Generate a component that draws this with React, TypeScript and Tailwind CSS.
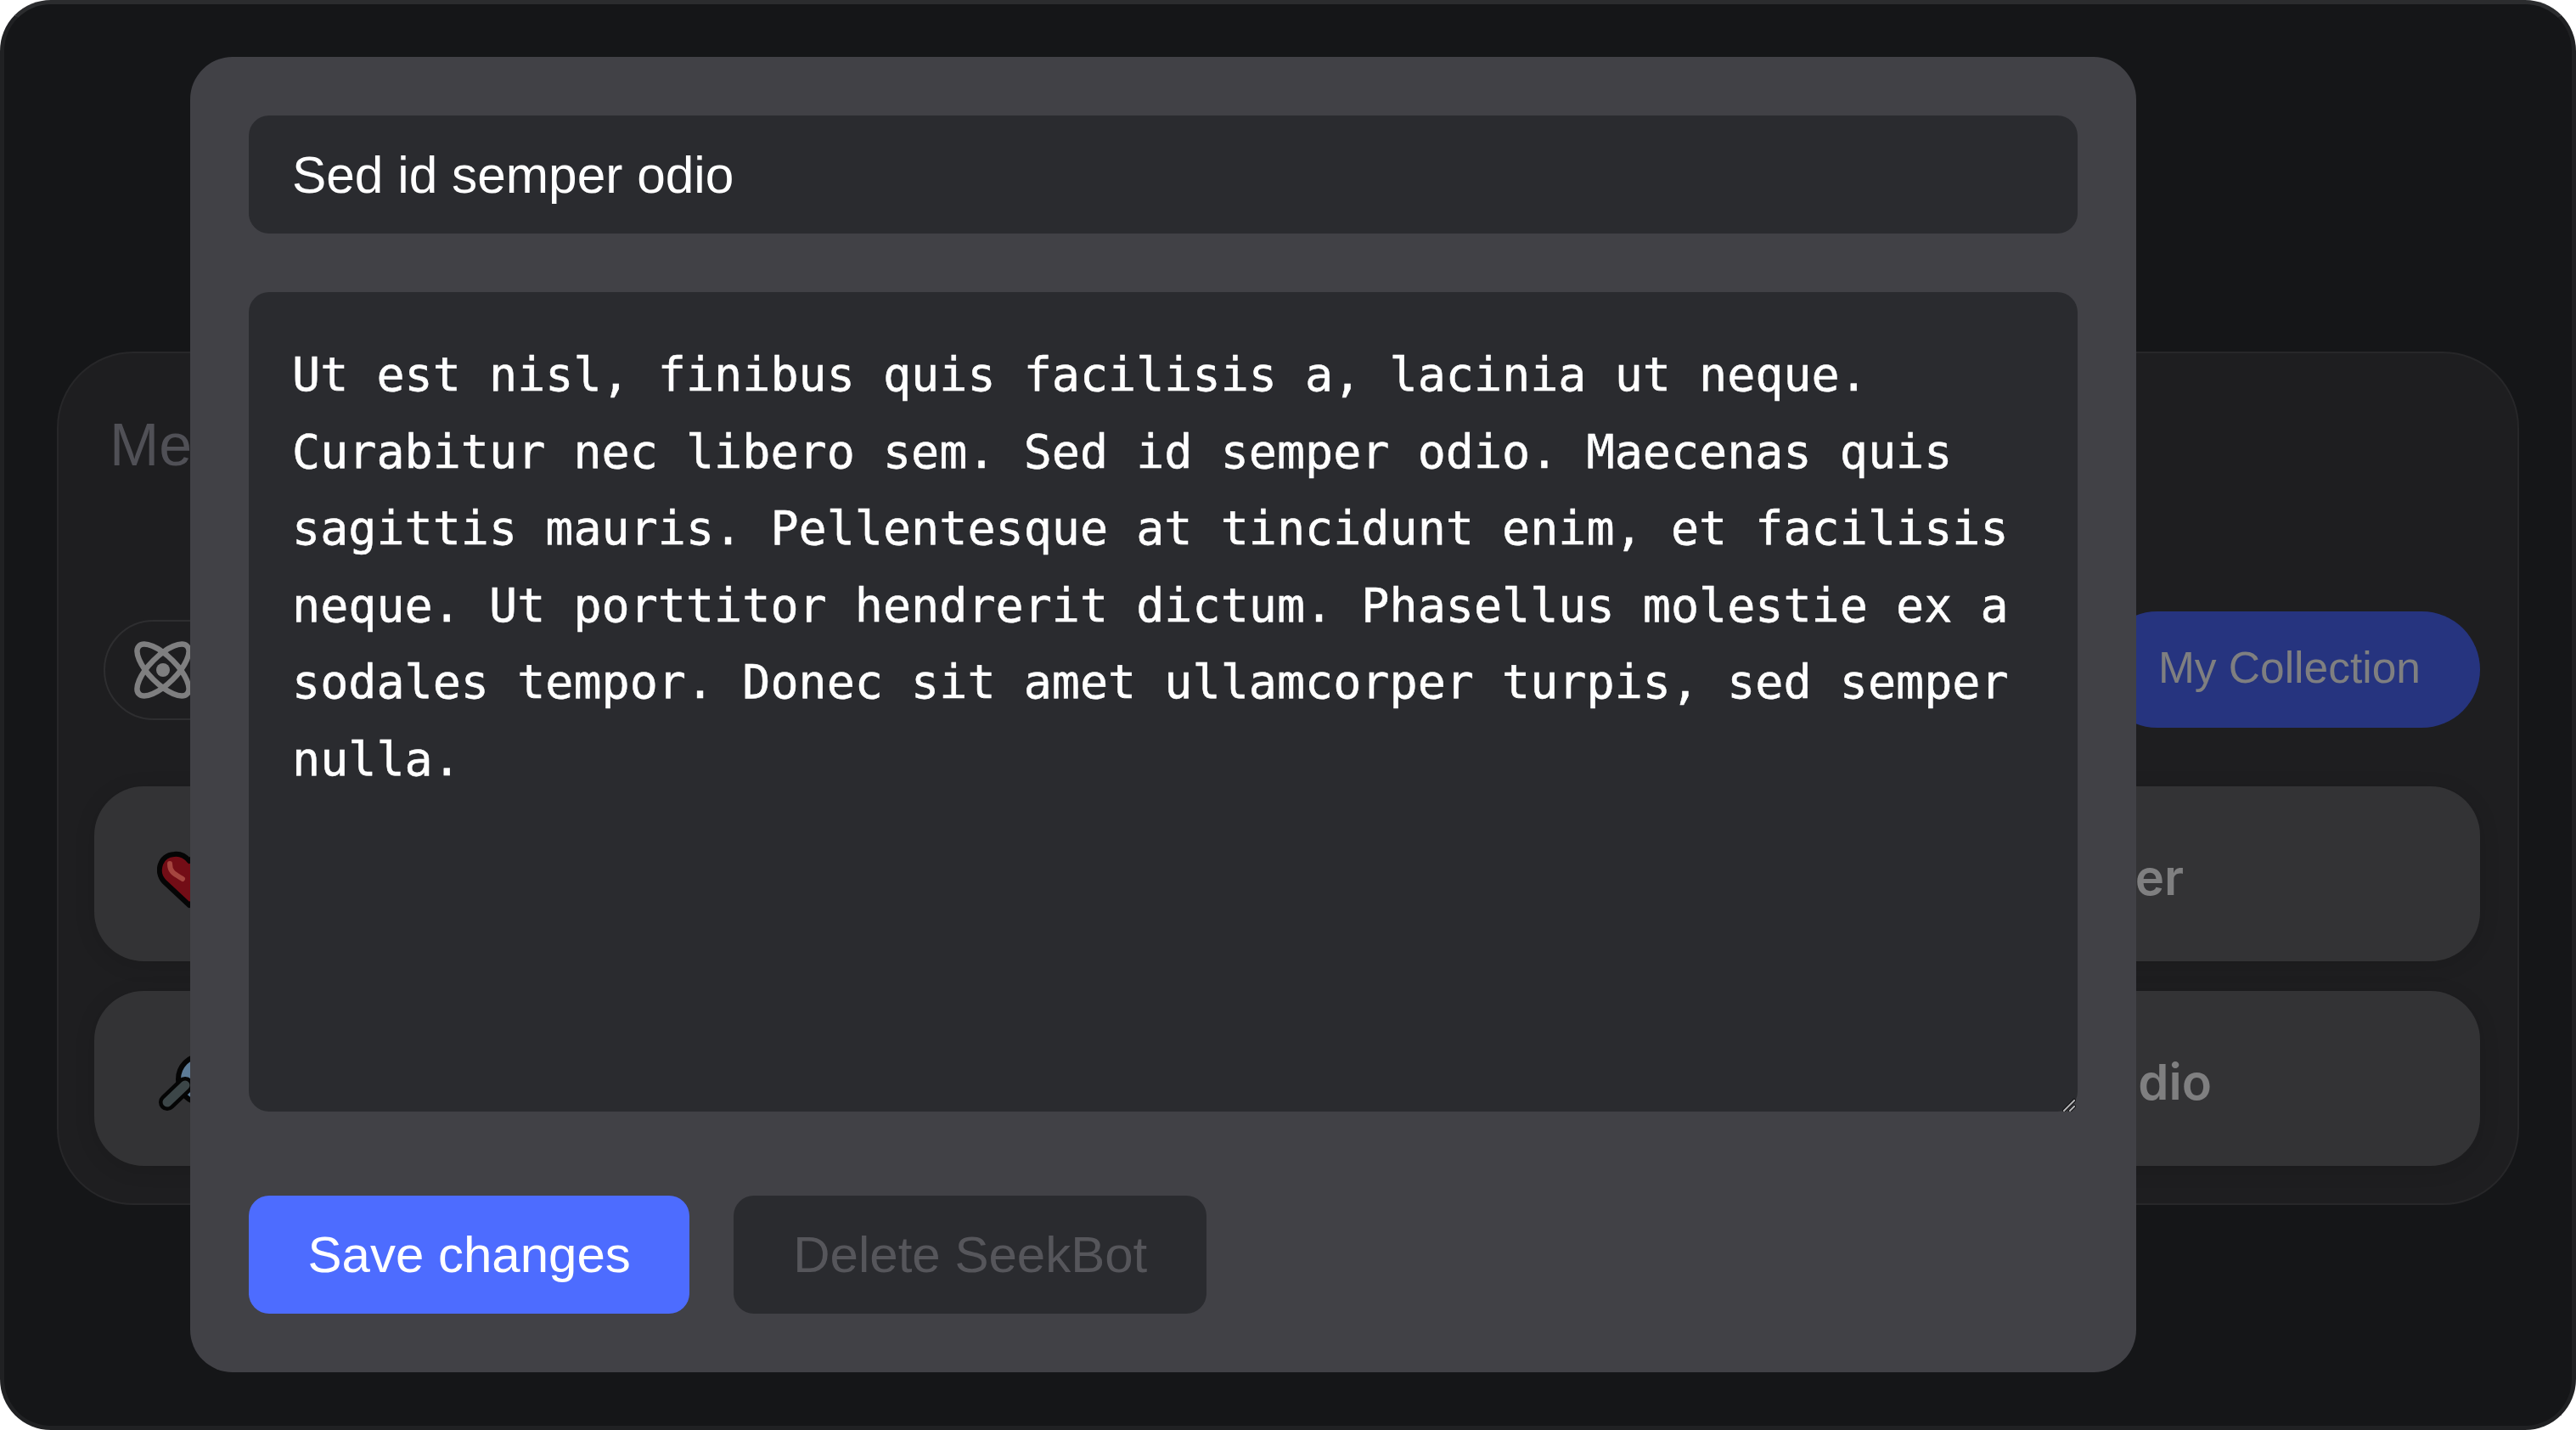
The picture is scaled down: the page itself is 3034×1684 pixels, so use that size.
const body = `Ut est nisl, finibus quis facilisis a, lacinia ut neque. Curabitur nec libero sem. Sed id semper odio. Maecenas quis sagittis mauris. Pellentesque at tincidunt enim, et facilisis neque. Ut porttitor hendrerit dictum. Phasellus molestie ex a sodales tempor. Donec sit amet ullamcorper turpis, sed semper nulla.`;

const AtomIcon = () => (
  <svg viewBox="0 0 80 80" className="h-[80px] w-[80px] shrink-0" fill="none" stroke="#7f7f80" strokeWidth="6.5">
    <ellipse cx="40" cy="40" rx="40" ry="16" transform="rotate(45 40 40)" />
    <ellipse cx="40" cy="40" rx="40" ry="16" transform="rotate(-45 40 40)" />
    <circle cx="40" cy="40" r="8" fill="#7f7f80" stroke="none" />
  </svg>
);

const HeartIcon = () => (
  <svg viewBox="0 -14 76 82" className="h-[82px] w-[76px] shrink-0">
    <path
      d="M38 64 L8 36 C-2 25 3 5 20 4 C28 3 34 7 38 12 C42 7 48 3 56 4 C73 5 78 25 68 36 Z"
      fill="#730d16"
      stroke="#050505"
      strokeWidth="6"
      strokeLinejoin="round"
    />
    <path d="M15 15 C15 25 20 27 30 33" fill="none" stroke="#a5453f" strokeWidth="6" strokeLinecap="round" />
  </svg>
);

const SearchIcon = () => (
  <svg viewBox="0 0 88 80" className="h-[80px] w-[88px] shrink-0">
    <circle cx="53" cy="41" r="28" fill="#5c7b97" stroke="#050505" strokeWidth="6" />
    <path d="M12 68 L33 48" stroke="#050505" strokeWidth="20" strokeLinecap="round" />
    <path d="M12 68 L33 48" stroke="#3c4648" strokeWidth="11" strokeLinecap="round" />
  </svg>
);

const AgentRow = ({ icon, label, pad }: { icon: React.ReactNode; label: string; pad: string }) => (
  <div className={`flex h-[206px] items-center justify-between rounded-[58px] bg-[#333335] pl-[74px] shadow-[0_4px_24px_rgba(0,0,0,0.12)] ${pad}`}>
    {icon}
    <span className="pt-[8px] font-['Inter',sans-serif] text-[58px] font-semibold text-[#7f7f80]">{label}</span>
  </div>
);

export default function App() {
  return (
    <div className="h-[1684px] w-[3034px] bg-white">
      <div className="relative h-full rounded-[60px] border-[5px] border-[#202123] border-t-[#2b2c2e] bg-[#151618] px-[62px] pt-[409px] font-['Liberation_Sans',sans-serif]">
        <div className="h-[1005px] rounded-[90px] border-2 border-[#272729] bg-[#1e1e20] pl-[42px] pr-[44px] pt-[68px]">
          <h2 className="pl-[18px] text-[70px] leading-[80px] text-[#505056]">Me</h2>

          <div className="mt-[156px] flex items-center justify-between">
            <div className="ml-[11px] flex h-[118px] w-[400px] items-center rounded-full border-2 border-[#2e2e30] px-[28px]">
              <AtomIcon />
            </div>
            <div className="flex h-[137px] items-center rounded-full bg-[#26347f] px-[70px] pb-[3px] text-[51.5px] text-[#7f7f80]">
              My Collection
            </div>
          </div>

          <div className="mt-[69px] flex flex-col gap-[35px]">
            <AgentRow icon={<HeartIcon />} label="ter" pad="pr-[349px]" />
            <AgentRow icon={<SearchIcon />} label="dio" pad="pr-[316px]" />
          </div>
        </div>

        {/* edit dialog */}
        <div className="absolute left-[219px] top-[62px] flex h-[1549px] w-[2292px] flex-col rounded-[50px] bg-[#414146] p-[69px]">
          <input
            defaultValue="Sed id semper odio"
            className="h-[139px] w-full shrink-0 rounded-[24px] bg-[#2a2b2f] px-[51px] text-[60.4px] text-white outline-none"
          />
          <div className="relative mt-[69px] h-[965px] shrink-0">
            <textarea
              defaultValue={body}
              className="h-full w-full resize-none rounded-[24px] bg-[#2a2b2f] py-[52px] pl-[51px] pr-[52px] font-['DejaVu_Sans_Mono',monospace] text-[55.05px] leading-[90.5px] text-white outline-none [-webkit-text-stroke:0.5px_white]"
            />
            <svg viewBox="0 0 16 16" className="absolute bottom-0 right-[2px] h-[16px] w-[16px]" fill="none" strokeLinecap="square">
              <path d="M2 15 L14 3 M9 15 L14 10" stroke="#0c0c0e" strokeWidth="4" />
              <path d="M2 15 L14 3 M9 15 L14 10" stroke="#b4b4b6" strokeWidth="2" />
            </svg>
          </div>
          <div className="mt-[99px] flex gap-[52px]">
            <button className="h-[139px] rounded-[24px] bg-[#4d6cff] px-[69.5px] text-[60px] text-white">Save changes</button>
            <button className="h-[139px] rounded-[24px] bg-[#2a2b2f] px-[70px] text-[60px] text-[#56565b]">Delete SeekBot</button>
          </div>
        </div>
      </div>
    </div>
  );
}
